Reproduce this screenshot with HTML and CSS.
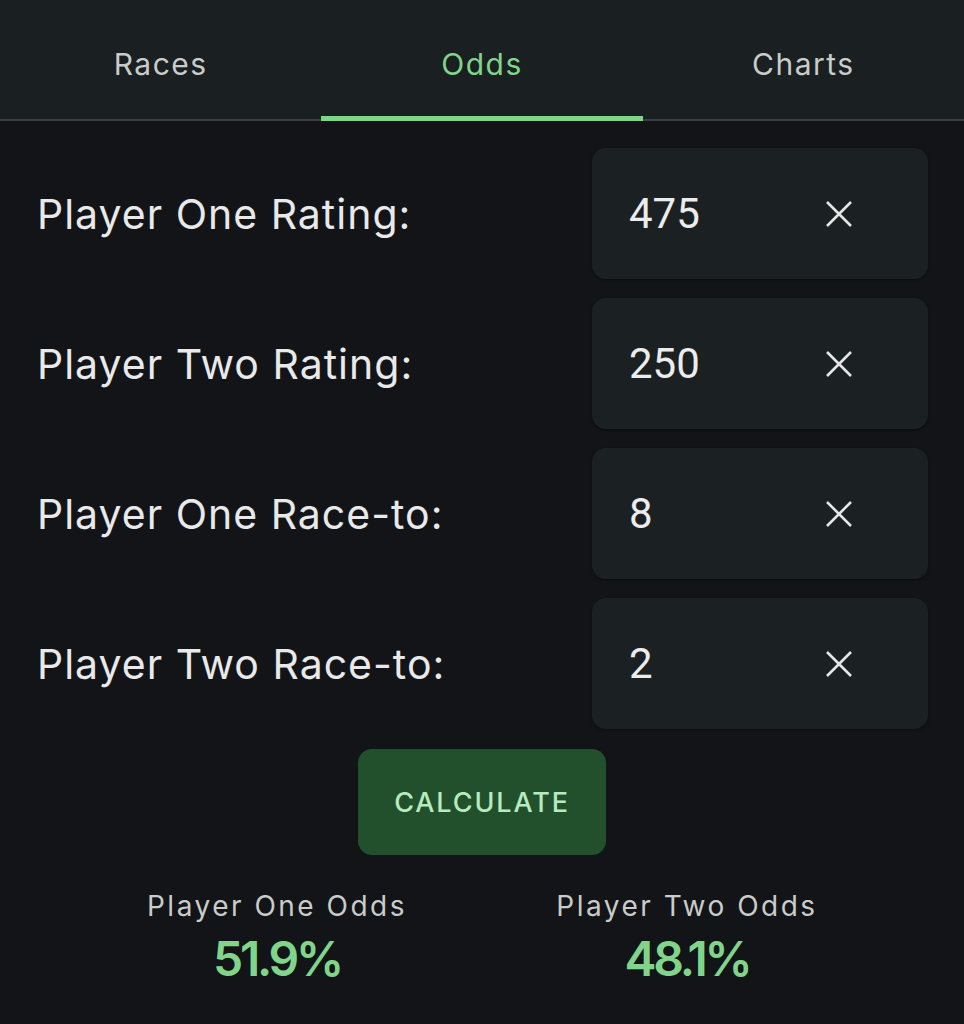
FILE: index.html
```html
<!DOCTYPE html>
<html lang="en">
<head>
  <meta charset="UTF-8">
  <meta name="viewport" content="width=device-width, initial-scale=1.0">
  <title>Odds</title>
  <link rel="stylesheet" href="styles.css">
</head>
<body>
  <div class="tabs">
    <div class="tab">Races</div>
    <div class="tab active">Odds</div>
    <div class="tab">Charts</div>
  </div>

  <div class="form">
    <div class="row">
      <label>Player One Rating:</label>
      <div class="field">
        <span class="value">475</span>
        <svg class="clear" width="28" height="28" viewBox="0 0 28 28"><path d="M2 2 L26 26 M26 2 L2 26" /></svg>
      </div>
    </div>
    <div class="row">
      <label>Player Two Rating:</label>
      <div class="field">
        <span class="value">250</span>
        <svg class="clear" width="28" height="28" viewBox="0 0 28 28"><path d="M2 2 L26 26 M26 2 L2 26" /></svg>
      </div>
    </div>
    <div class="row">
      <label>Player One Race-to:</label>
      <div class="field">
        <span class="value">8</span>
        <svg class="clear" width="28" height="28" viewBox="0 0 28 28"><path d="M2 2 L26 26 M26 2 L2 26" /></svg>
      </div>
    </div>
    <div class="row">
      <label>Player Two Race-to:</label>
      <div class="field">
        <span class="value">2</span>
        <svg class="clear" width="28" height="28" viewBox="0 0 28 28"><path d="M2 2 L26 26 M26 2 L2 26" /></svg>
      </div>
    </div>

    <button class="calc">CALCULATE</button>
  </div>

  <div class="results">
    <div class="result">
      <div class="result-label">Player One Odds</div>
      <div class="result-value">51.9%</div>
    </div>
    <div class="result">
      <div class="result-label">Player Two Odds</div>
      <div class="result-value">48.1%</div>
    </div>
  </div>
</body>
</html>
```

FILE: styles.css
```css
body {
  margin: 0;
  background-color: #121418;
  font-family: "Inter", "Open Sans", sans-serif;
  color: #e8e8e8;
}
.tabs {
  display: grid;
  grid-template-columns: 1fr 1fr 1fr;
  background-color: #1a1f21;
  border-bottom: 2px solid #3a3e40;
}
.tab {
  height: 121px;
  margin-bottom: -2px;
  border-bottom: 5px solid transparent;
  box-sizing: border-box;
  display: flex;
  align-items: center;
  justify-content: center;
  padding-top: 12px;
  font-size: 30px;
  letter-spacing: 1.5px;
  color: #c9ccc9;
}
.tab.active {
  color: #80d58b;
  border-bottom-color: #80d58b;
}
.form {
  padding: 27px 36px 0 37px;
  display: flex;
  flex-direction: column;
  gap: 19px;
}
.row {
  display: flex;
  align-items: center;
  justify-content: space-between;
}
label {
  font-size: 41px;
  letter-spacing: 1px;
  color: #e9e9e9;
}
.field {
  width: 336px;
  height: 131px;
  background-color: #1b2022;
  border-radius: 14px;
  display: flex;
  align-items: center;
  padding-left: 37px;
  box-sizing: border-box;
  box-shadow: 0 1px 3px rgba(0, 0, 0, 0.4);
}
.value {
  font-family: "Roboto", sans-serif;
  font-size: 42px;
  color: #ececec;
  width: 196px;
}
.clear path {
  stroke: #e6e6e6;
  stroke-width: 2.6;
  fill: none;
}
.calc {
  align-self: center;
  margin-top: 1px;
  margin-left: -1px;
  width: 248px;
  height: 106px;
  border: none;
  border-radius: 14px;
  background-color: #22502c;
  color: #b6ebbf;
  font-family: inherit;
  font-size: 27px;
  font-weight: 500;
  letter-spacing: 1.9px;
}
.results {
  display: flex;
  justify-content: center;
  margin-top: 34px;
}
.result {
  width: 410px;
  text-align: center;
}
.result-label {
  font-size: 28px;
  letter-spacing: 2.5px;
  color: #c9ccc9;
}
.result-value {
  font-size: 48px;
  font-weight: 600;
  letter-spacing: -3.2px;
  line-height: 1.1;
  margin-top: 10px;
  color: #80d58b;
}
```
